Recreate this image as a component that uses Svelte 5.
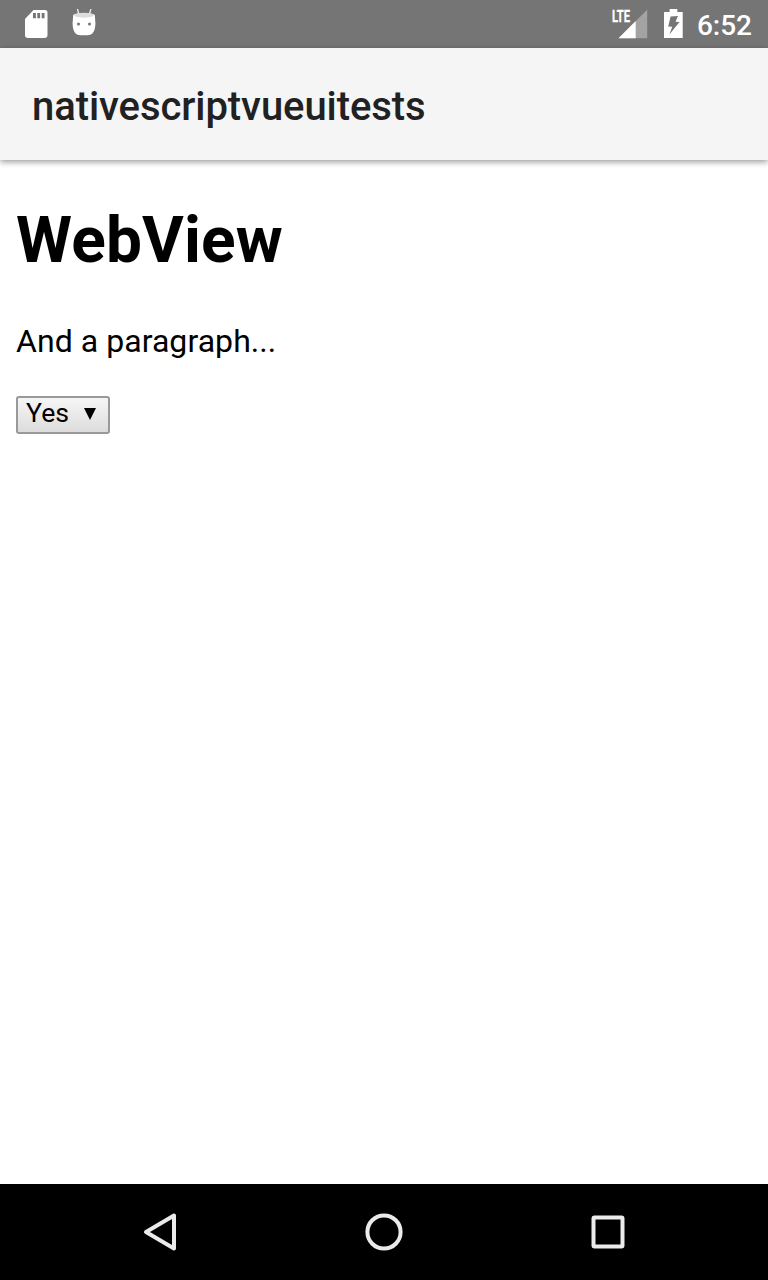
<script>
  const options = ['Yes'];
  let selected = $state(options[0]);
</script>

<div class="screen">
  <div class="status">
    <div class="group">
      <svg class="sd" width="24" height="30" viewBox="0 0 24 30">
        <path d="M9.5 1H21a2.5 2.5 0 0 1 2.500 2.500V26a3 3 0 0 1-3 3h-16.500a3 3 0 0 1-3-3V10z" fill="#fff" />
        <path d="M9 4h2.900v5.300H9zM13.300 4h2.800v5.300h-2.800zM17.700 4h2.800v5.300h-2.800z" fill="#757575" />
      </svg>
      <svg width="24" height="30" viewBox="0 0 24 30">
        <path d="M5.500.3l1.400 5M18.800.3l-1.400 5" stroke="#eee" stroke-width="1.300" stroke-linecap="round" />
        <path d="M1.200 6C4 3.200 20 3.200 22.800 6l.6 8c0 7.800-2.500 12.200-8.200 12.200H8.700C3 26.200.6 21.800.6 14z" fill="#fff" />
        <ellipse cx="12" cy="6.200" rx="9.800" ry="2.500" fill="#ddd" />
        <circle cx="6.500" cy="15" r="1.500" fill="#757575" />
        <circle cx="17.500" cy="15" r="1.500" fill="#757575" />
      </svg>
    </div>
    <div class="group right">
      <svg class="signal" width="37" height="40" viewBox="0 -4 37 40">
        <path d="M35.200 1.700V30.200H6.500z" fill="#a3a3a3" />
        <path d="M23.700 13V30.200H6.500z" fill="#fff" />
        <text x="0" y="14.400" textLength="18" lengthAdjust="spacingAndGlyphs" font-size="16.800" font-weight="700" fill="#fff" stroke="#fff" stroke-width=".3">LTE</text>
      </svg>
      <svg class="battery" width="20" height="30" viewBox="0 0 20 30">
        <path d="M5.600 0H13.300V2.900H18.700V29H0V2.900H5.600z" fill="#fff" />
        <path d="M6.600 7.500L14 7 11.500 12.700 15.500 12.900 5.400 25.600 8.200 17.700 4.200 17.400z" fill="#757575" />
      </svg>
      <span class="clock">6:52</span>
    </div>
  </div>
  <header>nativescriptvueuitests</header>
  <main>
    <h1>WebView</h1>
    <p>And a paragraph...</p>
    <button class="select" type="button" onclick={() => (selected = options[0])}>
      <span>{selected}</span>
      <svg width="12" height="12" viewBox="0 0 12 12"><path d="M0 0h12L6 12z" /></svg>
    </button>
  </main>
  <nav>
    <svg width="40" height="40" viewBox="0 0 40 40"><path d="M34 3.500v33L6 20z" /></svg>
    <svg width="40" height="40" viewBox="0 0 40 40"><circle cx="20" cy="20" r="16.600" /></svg>
    <svg width="40" height="40" viewBox="0 0 40 40"><rect x="5.500" y="5.500" width="29" height="29" rx="1" /></svg>
  </nav>
</div>

<style>
  .screen {
    display: flex;
    flex-direction: column;
    height: 1280px;
    background: #fff;
    font-family: Roboto, sans-serif;
    color: #000;
  }
  svg { display: block; }
  .signal { overflow: visible; }
  .status {
    height: 48px;
    display: flex;
    justify-content: space-between;
    align-items: center;
    padding: 0 16px 0 24px;
    box-sizing: border-box;
    background: #757575;
  }
  .group { display: flex; align-items: center; gap: 24px; }
  .group.right { gap: 0; }
  .battery { margin: 0 13px 0 15px; }
  .clock {
    color: #fff;
    font-size: 28px;
    font-weight: 500;
    line-height: 32px;
    padding-top: 3px;
  }
  header {
    height: 112px;
    box-sizing: border-box;
    padding: 5px 32px 0;
    line-height: 107px;
    background: #f5f5f5;
    color: #212121;
    font-size: 40px;
    font-weight: 500;
    letter-spacing: -0.07px;
    box-shadow: 0 2px 6px rgba(0, 0, 0, 0.4);
  }
  main { flex: 1; padding: 43px 16px 0; }
  h1 { margin: 0; font-size: 64px; line-height: 75px; font-weight: 700; letter-spacing: 0.15px; }
  p { margin: 44px 0 0; font-size: 32px; line-height: 38px; letter-spacing: 0.05px; }
  .select {
    margin: 36px 0 0;
    width: 94px;
    height: 38px;
    padding: 0 12px 4px 8px;
    display: flex;
    align-items: center;
    justify-content: space-between;
    border: 2px solid #999;
    border-radius: 3px;
    background: linear-gradient(#f6f6f6, #dcdcdc);
    color: #000;
    font-family: inherit;
    font-size: 26.667px;
    line-height: 30px;
  }
  .select svg { margin-top: 2px; }
  nav {
    height: 96px;
    display: flex;
    align-items: center;
    justify-content: center;
    gap: 184px;
    background: #000;
  }
  nav svg { fill: none; stroke: #ebebeb; stroke-width: 4; stroke-linejoin: round; }
</style>
